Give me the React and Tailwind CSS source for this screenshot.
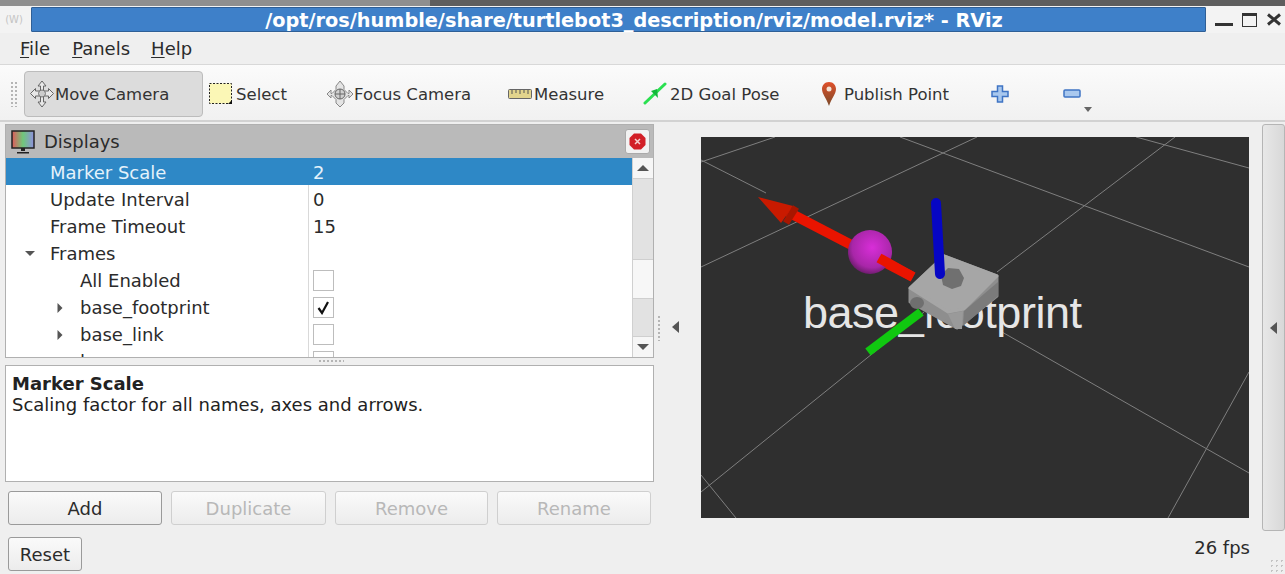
import { useState } from "react";

const FONT = "font-['DejaVu_Sans',sans-serif]";

function MoveIcon() {
  return (
    <svg width="26" height="28" viewBox="0 0 26 28" className="shrink-0">
      <g fill="#e8e8e8" stroke="#666" strokeWidth="1">
        <path d="M13 1l4 5h-2.500v5h5V8.500l5 5-5 5V16h-5v6H17l-4 5-4-5h2.500v-6h-5v2.500l-5-5 5-5V11h5V6H9z" />
      </g>
      <circle cx="13" cy="13.500" r="3.500" fill="#ccc" stroke="#777" />
    </svg>
  );
}

function SelectIcon() {
  return (
    <svg width="26" height="26" viewBox="0 0 26 26" className="shrink-0">
      <rect x="1.500" y="2.500" width="22" height="20" fill="#fbf7b6" stroke="#222" strokeDasharray="2 1.500" />
      <path d="M24 19v4h-4z" fill="#111" />
    </svg>
  );
}

function FocusIcon() {
  return (
    <svg width="26" height="28" viewBox="0 0 26 28" className="shrink-0">
      <path d="M13 1l4 5v3.500l4 4h1V10l4 4-4 4v-2.500h-1l-4 4V23l-4 4-4-4v-3.500l-4-4H4V18l-4-4 4-4v3.500h1l4-4V6z" fill="#e4e4e4" stroke="#888" />
      <circle cx="13" cy="14" r="5" fill="#d0d0d0" stroke="#666" />
      <path d="M13 9v10M8 14h10" stroke="#666" />
    </svg>
  );
}

function MeasureIcon() {
  return (
    <svg width="24" height="12" viewBox="0 0 24 12" className="shrink-0">
      <rect x="0.500" y="1.500" width="23" height="9" rx="1" fill="#e2d48c" stroke="#666" />
      <path d="M4 2v4M8 2v3M12 2v4M16 2v3M20 2v4" stroke="#555" />
    </svg>
  );
}

function GoalIcon() {
  return (
    <svg width="24" height="24" viewBox="0 0 24 24" className="shrink-0">
      <path d="M2 21L22 2" stroke="#2ae050" strokeWidth="3" strokeLinecap="round" />
      <path d="M8 9l7 7-1-9z" fill="#12b83a" />
    </svg>
  );
}

function PinIcon() {
  return (
    <svg width="16" height="26" viewBox="0 0 16 26" className="shrink-0">
      <defs>
        <linearGradient id="pinFill" x1="0" y1="0" x2="0" y2="1">
          <stop offset="0" stopColor="#e0502a" />
          <stop offset="1" stopColor="#7a4a2a" />
        </linearGradient>
      </defs>
      <path d="M8 1C3.500 1 1 4.500 1 8c0 5 4.500 9 7 17 2.500-8 7-12 7-17 0-3.500-2.500-7-7-7z" fill="url(#pinFill)" />
      <circle cx="8" cy="8" r="2.500" fill="#f3e2d4" />
    </svg>
  );
}

function PlusIcon() {
  return (
    <svg width="18" height="18" viewBox="0 0 18 18">
      <path d="M6.500 1h5v5.500H17v5h-5.500V17h-5v-5.500H1v-5h5.500z" fill="#a9c8ee" stroke="#3f74c4" strokeWidth="1.500" />
    </svg>
  );
}

function MinusIcon() {
  return (
    <svg width="18" height="10" viewBox="0 0 18 10">
      <rect x="1" y="1" width="16" height="7" rx="1" fill="#a9c8ee" stroke="#3f74c4" strokeWidth="1.500" />
    </svg>
  );
}

function ToolButton({ icon, label, className }) {
  return (
    <div className={"flex items-center h-[46px] text-[16.5px] text-[#333] " + className}>
      {icon}
      <span className="pt-[4px]">{label}</span>
    </div>
  );
}

function Mnemonic({ first, rest, className }) {
  return (
    <span className={className}>
      <span className="underline underline-offset-2">{first}</span>
      {rest}
    </span>
  );
}

function Check({ checked }) {
  return (
    <div className="w-[21px] h-[21px] border border-[#bdbdbd] bg-white flex items-center justify-center">
      {checked && (
        <svg width="15" height="15" viewBox="0 0 15 15">
          <path d="M2.500 8l3.500 5 6-11" fill="none" stroke="#111" strokeWidth="2.200" />
        </svg>
      )}
    </div>
  );
}

function Caret({ open }) {
  return open ? (
    <svg width="12" height="8" viewBox="0 0 12 8">
      <path d="M1 1h10L6 6z" fill="#555" />
    </svg>
  ) : (
    <svg width="8" height="12" viewBox="0 0 8 12">
      <path d="M1.500 1l5 5-5 5z" fill="#555" />
    </svg>
  );
}

function Row({ label, value, indent, caret, check, selected }) {
  return (
    <div className={"flex h-[27px] items-center shrink-0 " + (selected ? "bg-[#2e88c6] text-[#e4f2fb]" : "text-[#2b2b2b]")}>
      <div className="w-[302px] flex items-center shrink-0 relative h-full pt-[2px]">
        {caret && (
          <span className={"absolute flex items-center " + (caret === "open" ? "left-[18px]" : "left-[50px]")}>
            <Caret open={caret === "open"} />
          </span>
        )}
        <span className={indent ? "pl-[74px]" : "pl-[44px]"}>{label}</span>
      </div>
      <div className={"flex-1 h-full flex items-center pl-[4px] pt-[2px] border-l " + (selected ? "border-transparent" : "border-[#d9d9d9]")}>
        {check !== undefined ? <Check checked={check} /> : <span>{value}</span>}
      </div>
    </div>
  );
}

function ActionButton({ label, disabled, className }) {
  return (
    <div
      className={
        "h-[34px] rounded-[3px] border flex items-center justify-center bg-gradient-to-b from-[#fafafa] to-[#ececec] " +
        (disabled ? "border-[#cfcfcf] text-[#b8b8b8] " : "border-[#9a9a9a] text-[#2b2b2b] ") +
        className
      }
    >
      {label}
    </div>
  );
}

function Scene() {
  const lines = [
    [701, 162, 775, 137],
    [701, 160, 766, 193],
    [701, 267, 977, 137],
    [900, 137, 1249, 267],
    [1136, 137, 1249, 168],
    [1175, 137, 997, 272],
    [1002, 332, 1249, 473],
    [1249, 372, 1168, 518],
    [924, 312, 701, 492],
    [701, 475, 736, 518],
  ];
  return (
    <svg viewBox="701 137 548 381" width="548" height="381" className="block">
      <rect x="701" y="137" width="548" height="381" fill="#2f2f2f" />
      {lines.map((l, i) => (
        <line key={i} x1={l[0]} y1={l[1]} x2={l[2]} y2={l[3]} stroke="#7f7f7f" strokeWidth="1" />
      ))}
      <text x="803" y="328" fontFamily="'Liberation Sans', sans-serif" fontSize="45" fill="#e6e6e6" textLength="279">
        base_footprint
      </text>
      {/* red axis */}
      <path d="M788 212L913 277" stroke="#ea1400" strokeWidth="10" />
      <path d="M758 197L793 206L781 223z" fill="#c91a00" />
      <path d="M796 207L786 223" stroke="#a81600" strokeWidth="7" />
      {/* sphere */}
      <defs>
        <radialGradient id="ball" cx="0.550" cy="0.400" r="0.650">
          <stop offset="0" stopColor="#d82ed8" />
          <stop offset="0.700" stopColor="#a826a8" />
          <stop offset="1" stopColor="#5e1a5e" />
        </radialGradient>
      </defs>
      <circle cx="870" cy="252" r="22" fill="url(#ball)" />
      <path d="M879 258L913 277" stroke="#ea1400" strokeWidth="10" />
      {/* robot body */}
      <path d="M910 288L944 256L997 276V296L957 328L910 302z" fill="#8e8e8e" stroke="#8e8e8e" strokeWidth="3" strokeLinejoin="round" />
      <path d="M910 288L944 256L997 276L964 309L948 312z" fill="#a6a6a6" stroke="#a6a6a6" strokeWidth="3" strokeLinejoin="round" />
      <path d="M964 311L998 282V296L963 326z" fill="#7b7b7b" />
      <path d="M948 314L963 311L962 329L955 329z" fill="#9a9a9a" />
      <ellipse cx="917" cy="303" rx="7" ry="6" fill="#6f6f6f" />
      <path d="M964 278l-5-9-11-1-7 7 2 10 9 4 9-3z" fill="#707070" />
      {/* green axis */}
      <path d="M921 312L868 352" stroke="#10c810" strokeWidth="9" />
      {/* blue axis */}
      <path d="M936 203L940 274" stroke="#0606c4" strokeWidth="10" strokeLinecap="round" />
    </svg>
  );
}

export default function App() {
  const [selected] = useState("Marker Scale");

  return (
    <div className={"relative w-[1285px] h-[574px] overflow-hidden bg-[#efefef] text-[18px] text-[#2b2b2b] flex flex-col " + FONT}>
      {/* desktop strip above the window */}
      <div className="h-[6px] shrink-0 bg-[#5e5e5e] flex">
        <div className="w-[430px] bg-[#8f8f8f]" />
      </div>

      {/* title bar */}
      <div className="h-[27px] shrink-0 flex items-center bg-[#f3f3f3] pl-[3px]">
        <div className="w-[22px] text-[10px] text-[#c4c4c4] text-center">(W)</div>
        <div className="ml-[6px] w-[1175px] h-[25px] bg-[#3e80c9] border border-[#2f5f96] rounded-[1px] flex items-center justify-center font-bold text-white">
          <span className="pl-[31px] pt-[4px] text-[19.3px]">/opt/ros/humble/share/turtlebot3_description/rviz/model.rviz* - RViz</span>
        </div>
        <div className="flex items-center gap-[9px] pl-[9px] text-[#333]">
          <div className="w-[18px] h-[3px] mt-[10px] bg-[#333]" />
          <div className="w-[15px] h-[14px] border border-[#333] border-t-[3px]" />
          <svg width="16" height="13" viewBox="0 0 16 13">
            <path d="M2 1.500l12 10M14 1.500l-12 10" stroke="#333" strokeWidth="3" />
          </svg>
        </div>
      </div>

      {/* menu bar */}
      <div className="h-[32px] shrink-0 flex items-center pl-[20px] border-b border-[#d8d8d8]">
        <Mnemonic first="F" rest="ile" />
        <Mnemonic first="P" rest="anels" className="ml-[22px]" />
        <Mnemonic first="H" rest="elp" className="ml-[21px]" />
      </div>

      {/* tool bar */}
      <div className="h-[57px] shrink-0 flex items-center pl-[24px] pt-[2px] bg-gradient-to-b from-[#fbfbfb] to-[#f1f1f1] border-b-2 border-[#d2d2d2] relative">
        <div className="absolute left-[10px] top-[16px] w-[9px] h-[26px] bg-[radial-gradient(#b5b5b5_1px,transparent_1px)] bg-[length:4px_4px]" />
        <ToolButton
          icon={<MoveIcon />}
          label="Move Camera"
          className="w-[179px] pl-[4px] rounded-[4px] bg-[#dcdcdc] border border-[#bcbcbc]"
        />
        <ToolButton icon={<SelectIcon />} label="Select" className="ml-[5px] w-[119px] gap-[2px]" />
        <ToolButton icon={<FocusIcon />} label="Focus Camera" className="w-[181px] gap-[1px]" />
        <ToolButton icon={<MeasureIcon />} label="Measure" className="w-[135px] gap-[2px]" />
        <ToolButton icon={<GoalIcon />} label="2D Goal Pose" className="w-[178px] gap-[3px]" />
        <ToolButton icon={<PinIcon />} label="Publish Point" className="w-[170px] gap-[7px]" />
        <div className="w-[72px] flex items-center">
          <PlusIcon />
        </div>
        <div className="flex items-center">
          <MinusIcon />
        </div>
        <div className="absolute left-[1084px] top-[42px] w-0 h-0 border-x-[4px] border-x-transparent border-t-[5px] border-t-[#666]" />
      </div>

      {/* main area */}
      <div className="flex-1 flex min-h-0">
        {/* left column */}
        <div className="w-[654px] shrink-0 pl-[5px] pt-[2px] flex flex-col">
          <div className="border border-[#b0b0b0] flex flex-col h-[234px] shrink-0">
            <div className="h-[33px] shrink-0 bg-[#bababa] flex items-center pl-[4px]">
              <svg width="26" height="26" viewBox="0 0 26 26" className="shrink-0">
                <defs>
                  <linearGradient id="rgb" x1="0" y1="0" x2="1" y2="0">
                    <stop offset="0" stopColor="#e05a5a" />
                    <stop offset="0.500" stopColor="#6fc87a" />
                    <stop offset="1" stopColor="#8f8fe0" />
                  </linearGradient>
                </defs>
                <rect x="2" y="2" width="22" height="17" fill="url(#rgb)" stroke="#222" strokeWidth="1.500" />
                <path d="M11 19h4v3h-4zM7 23h12v1.500H7z" fill="#222" />
              </svg>
              <span className="ml-[8px] flex-1">Displays</span>
              <div className="w-[25px] h-[25px] mr-[3px] rounded-[3px] bg-[#f2f2f2] border border-[#aaa] flex items-center justify-center">
                <svg width="17" height="17" viewBox="0 0 17 17">
                  <path d="M5 .5h7L16.500 5v7L12 16.500H5L.5 12V5z" fill="#d21f27" />
                  <path d="M6 6l5 5M11 6l-5 5" stroke="#f6d0d0" strokeWidth="1.500" />
                </svg>
              </div>
            </div>
            <div className="flex-1 min-h-0 flex bg-white">
              <div className="flex-1 overflow-hidden flex flex-col">
                <Row label="Marker Scale" value="2" selected={selected === "Marker Scale"} />
                <Row label="Update Interval" value="0" />
                <Row label="Frame Timeout" value="15" />
                <Row label="Frames" caret="open" />
                <Row label="All Enabled" indent check={false} />
                <Row label="base_footprint" indent caret="closed" check={true} />
                <Row label="base_link" indent caret="closed" check={false} />
                <Row label="l" indent caret="closed" check={false} />
              </div>
              {/* scroll bar */}
              <div className="w-[21px] shrink-0 border-l border-[#d0d0d0] flex flex-col bg-[#e2e2e2]">
                <div className="h-[21px] shrink-0 bg-[#f6f6f6] border-b border-[#cfcfcf] flex items-center justify-center">
                  <div className="w-0 h-0 border-x-[6px] border-x-transparent border-b-[6px] border-b-[#555]" />
                </div>
                <div className="h-[80px] shrink-0" />
                <div className="h-[40px] shrink-0 bg-[#f7f7f7] border-y border-[#cfcfcf]" />
                <div className="flex-1" />
                <div className="h-[21px] shrink-0 bg-[#f6f6f6] border-t border-[#cfcfcf] flex items-center justify-center">
                  <div className="w-0 h-0 border-x-[6px] border-x-transparent border-t-[6px] border-t-[#555]" />
                </div>
              </div>
            </div>
          </div>

          {/* description */}
          <div className="mt-[7px] h-[117px] shrink-0 bg-white border border-[#b0b0b0] pl-[6px] pt-[7px] leading-[21px] text-[#222]">
            <div className="font-bold">Marker Scale</div>
            <div>Scaling factor for all names, axes and arrows.</div>
          </div>

          {/* buttons */}
          <div className="mt-[9px] flex pl-[3px] gap-[9px]">
            <ActionButton label="Add" className="w-[154px]" />
            <ActionButton label="Duplicate" disabled className="w-[155px]" />
            <ActionButton label="Remove" disabled className="w-[153px]" />
            <ActionButton label="Rename" disabled className="w-[154px]" />
          </div>
          <div className="mt-[12px] pl-[3px]">
            <ActionButton label="Reset" className="w-[74px] h-[33px]" />
          </div>
        </div>

        {/* splitter */}
        <div className="w-[47px] shrink-0 relative flex items-center">
          <div className="w-0 h-0 ml-[18px] -mt-[42px] border-y-[6px] border-y-transparent border-r-[7px] border-r-[#555]" />
        </div>

        {/* viewport */}
        <div className="w-[548px] shrink-0 pt-[15px] flex flex-col">
          <Scene />
          <div className="mt-[16px] text-right -mr-px">26 fps</div>
        </div>

        {/* right side handle */}
        <div className="flex-1 pl-[13px] pt-[2px]">
          <div className="h-[407px] w-[23px] rounded-[3px] border border-[#b5b5b5] bg-gradient-to-r from-[#e8e8e8] to-[#d8d8d8] flex items-center justify-center">
            <div className="w-0 h-0 border-y-[6px] border-y-transparent border-r-[7px] border-r-[#555]" />
          </div>
        </div>
      </div>

      {/* splitter and window grips */}
      <div className="absolute left-[657px] top-[315px] w-[4px] h-[26px] bg-[radial-gradient(#b5b5b5_1px,transparent_1px)] bg-[length:4px_4px]" />
      <div className="absolute left-[318px] top-[359px] w-[26px] h-[4px] bg-[radial-gradient(#b5b5b5_1px,transparent_1px)] bg-[length:4px_4px]" />
      <div className="absolute left-[1269px] top-[558px] w-[16px] h-[16px] bg-[radial-gradient(#c4c4c4_1px,transparent_1px)] bg-[length:5px_5px]" />
    </div>
  );
}
